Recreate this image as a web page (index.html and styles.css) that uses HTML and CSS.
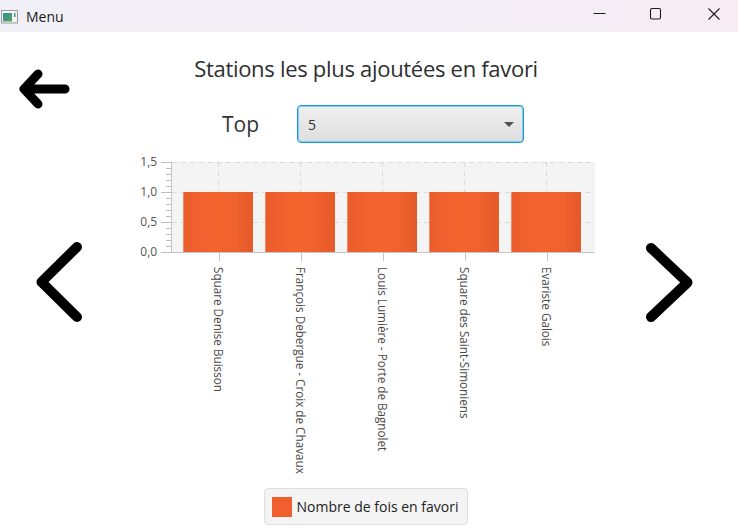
FILE: index.html
```html
<!DOCTYPE html>
<html lang="fr">
<head>
<meta charset="utf-8">
<title>Menu</title>
<link rel="stylesheet" href="styles.css">
</head>
<body>
<div class="window">
  <header class="titlebar">
    <svg class="app-icon" width="18" height="14" viewBox="0 0 18 14">
      <defs>
        <linearGradient id="ig" x1="0" y1="0" x2="1" y2="1">
          <stop offset="0" stop-color="#2f8f9a"/>
          <stop offset="1" stop-color="#5aa05a"/>
        </linearGradient>
      </defs>
      <rect x="0.5" y="0.5" width="16" height="12.5" fill="#f4f4f4" stroke="#9a9a9a"/>
      <rect x="2" y="3" width="9" height="8.5" fill="url(#ig)"/>
      <rect x="13" y="3" width="1.5" height="4" fill="#3f96a8"/>
    </svg>
    <span class="app-title">Menu</span>
    <div class="win-controls">
      <svg class="ctl" width="46" height="32" viewBox="0 0 46 32"><path d="M17.5 13.5 H29.5" stroke="#1c1c1c" stroke-width="1"/></svg>
      <svg class="ctl" width="58" height="32" viewBox="0 0 58 32"><rect x="28.5" y="8.5" width="10" height="10.5" rx="1.5" fill="none" stroke="#1c1c1c" stroke-width="1.1"/></svg>
      <svg class="ctl" width="58" height="32" viewBox="0 0 58 32"><path d="M28.5 8.5 L39.5 19.5 M39.5 8.5 L28.5 19.5" stroke="#1c1c1c" stroke-width="1.1"/></svg>
    </div>
  </header>

  <main class="main">
    <nav class="side side-left">
      <svg class="back" width="60" height="44" viewBox="0 0 60 44">
        <path d="M51 23 H10 M24 8 L10 23 L24 38" fill="none" stroke="#000" stroke-width="9" stroke-linecap="round" stroke-linejoin="round"/>
      </svg>
      <svg class="chev chev-left" width="56" height="90" viewBox="0 0 56 90">
        <path d="M47 10 L11.5 45 L47 80" fill="none" stroke="#000" stroke-width="10" stroke-linecap="round" stroke-linejoin="round"/>
      </svg>
    </nav>

    <section class="center">
      <h1 class="title">Stations les plus ajoutées en favori</h1>

      <div class="top-row">
        <span class="top-label">Top</span>
        <div class="combo">
          <span class="combo-value">5</span>
          <span class="combo-arrow"></span>
        </div>
      </div>

      <div class="chart">
        <div class="y-axis">
          <div class="y-labels">
            <span>1,5</span>
            <span>1,0</span>
            <span>0,5</span>
            <span>0,0</span>
          </div>
          <div class="y-ticks"></div>
        </div>
        <div class="plot-wrap">
          <div class="plot">
            <div class="cat"><div class="bar" style="height:60px"></div></div>
            <div class="cat"><div class="bar" style="height:60px"></div></div>
            <div class="cat"><div class="bar" style="height:60px"></div></div>
            <div class="cat"><div class="bar" style="height:60px"></div></div>
            <div class="cat"><div class="bar" style="height:60px"></div></div>
          </div>
          <div class="x-axis">
            <div class="x-cat"><span class="tick"></span><span class="x-label">Square Denise Buisson</span></div>
            <div class="x-cat"><span class="tick"></span><span class="x-label">François Debergue - Croix de Chavaux</span></div>
            <div class="x-cat"><span class="tick"></span><span class="x-label">Louis Lumière - Porte de Bagnolet</span></div>
            <div class="x-cat"><span class="tick"></span><span class="x-label">Square des Saint-Simoniens</span></div>
            <div class="x-cat"><span class="tick"></span><span class="x-label">Evariste Galois</span></div>
          </div>
        </div>
      </div>

      <div class="legend-row">
        <div class="legend">
          <span class="legend-mark"></span>
          <span class="legend-text">Nombre de fois en favori</span>
        </div>
      </div>
    </section>

    <nav class="side side-right">
      <svg class="chev chev-right" width="60" height="90" viewBox="0 0 60 90">
        <path d="M11 10 L47.5 44.5 L11 79" fill="none" stroke="#000" stroke-width="10" stroke-linecap="round" stroke-linejoin="round"/>
      </svg>
    </nav>
  </main>
</div>
</body>
</html>
```

FILE: styles.css
```css
* { box-sizing: border-box; }

html, body {
  margin: 0;
  padding: 0;
  background: #ffffff;
}

body {
  font-family: "Open Sans", "Noto Sans", "DejaVu Sans", sans-serif;
  color: #333333;
}

.window {
  width: 738px;
  height: 530px;
  display: flex;
  flex-direction: column;
  overflow: hidden;
}

/* ---------- title bar ---------- */
.titlebar {
  height: 32px;
  flex: 0 0 32px;
  display: flex;
  align-items: center;
  background: linear-gradient(to right, #f2f0f7, #f3eef7 60%, #f7ecf4);
}

.app-icon {
  margin-left: 1px;
  margin-top: 1px;
}

.app-title {
  margin-left: 7px;
  font-size: 14px;
  color: #1a1a1a;
  font-family: "Open Sans", "Noto Sans", sans-serif;
}

.win-controls {
  margin-left: auto;
  display: flex;
  align-items: flex-start;
  align-self: stretch;
}

.ctl { display: block; }

/* ---------- main ---------- */
.main {
  flex: 1;
  display: grid;
  grid-template-columns: 100px 1fr 100px;
}

.side {
  display: flex;
  flex-direction: column;
  align-items: flex-start;
}

.back {
  display: block;
  margin-top: 34px;
  margin-left: 14px;
}

.chev-left {
  display: block;
  margin-top: 127px;
  margin-left: 30px;
}

.chev-right {
  display: block;
  margin-top: 206px;
  margin-left: 2px;
}

/* ---------- center ---------- */
.center {
  display: flex;
  flex-direction: column;
}

.title {
  margin: 21px 0 0 0;
  padding-right: 6px;
  font-size: 22px;
  letter-spacing: -0.3px;
  line-height: 30px;
  font-weight: 400;
  text-align: center;
  color: #2e2e2e;
}

.top-row {
  margin-top: 22px;
  display: flex;
  align-items: center;
  padding-left: 122px;
}

.top-label {
  width: 75px;
  font-size: 21px;
  color: #333333;
}

.combo {
  width: 227px;
  height: 38px;
  display: flex;
  align-items: center;
  justify-content: space-between;
  padding: 0 9px 0 10px;
  border: 1px solid #1d9ad6;
  border-radius: 4px;
  box-shadow: inset 0 0 0 1px #7fcdee;
  background: linear-gradient(to bottom, #efefef, #dedede);
}

.combo-value {
  font-size: 14px;
  color: #333333;
}

.combo-arrow {
  width: 0;
  height: 0;
  border-left: 5px solid transparent;
  border-right: 5px solid transparent;
  border-top: 5px solid #505050;
  margin-top: 1px;
}

/* ---------- chart ---------- */
.chart {
  margin-top: 19px;
  display: flex;
  align-items: flex-start;
}

.y-axis {
  width: 72px;
  display: flex;
  align-items: flex-start;
}

.y-labels {
  width: 58px;
  height: 102px;
  margin-top: -6px;
  display: flex;
  flex-direction: column;
  justify-content: space-between;
  align-items: flex-end;
  font-size: 12px;
  line-height: 12px;
  color: #555555;
}

.y-ticks {
  width: 13px;
  height: 91px;
  margin-left: 2px;
  border-right: 1px solid #c4c4c4;
  background-image:
    repeating-linear-gradient(to bottom, #bdbdbd 0 1px, transparent 1px 30px),
    repeating-linear-gradient(to bottom, #bdbdbd 0 1px, transparent 1px 6px);
  background-size: 10px 100%, 5px 100%;
  background-position: 2px 0, 7px 0;
  background-repeat: no-repeat;
}

.plot-wrap {
  width: 423px;
  display: flex;
  flex-direction: column;
}

.plot {
  height: 90px;
  display: flex;
  align-items: flex-end;
  padding-left: 5px;
  background-color: #f4f4f4;
  background-image:
    linear-gradient(to right, #dadada 5px, transparent 5px),
    linear-gradient(to right, #dadada 5px, transparent 5px),
    linear-gradient(to right, #dadada 5px, transparent 5px);
  background-size: 9px 1px;
  background-repeat: repeat-x;
  background-position: 0 0, 0 30px, 0 60px;
}

.cat {
  width: 82px;
  height: 100%;
  display: flex;
  align-items: flex-end;
  justify-content: center;
  background-image: linear-gradient(to bottom, #dadada 5px, transparent 5px);
  background-size: 1px 9px;
  background-repeat: repeat-y;
  background-position: 41px 0;
}

.bar {
  width: 70px;
  background: linear-gradient(to right, #e95d2c, #f0612d 25%, #f3642f 50%, #ef612d 75%, #e45a29);
  box-shadow: inset 1px 0 0 #f08b62;
}

.x-axis {
  display: flex;
  padding-left: 5px;
  margin-left: -2px;
  border-top: 1px solid #c4c4c4;
  height: 236px;
}

.x-cat {
  width: 82px;
  display: flex;
  flex-direction: column;
  align-items: center;
  margin-left: 0;
}

.x-cat:first-child { margin-left: 2px; }

.tick {
  width: 1px;
  height: 8px;
  margin-left: 2px;
  background: #c4c4c4;
}

.x-label {
  margin-top: 6px;
  writing-mode: vertical-rl;
  font-size: 11.7px;
  line-height: 13px;
  color: #4a4a4a;
  white-space: nowrap;
}

/* ---------- legend ---------- */
.legend-row {
  display: flex;
  justify-content: center;
  padding-right: 7px;
}

.legend {
  display: flex;
  align-items: center;
  height: 37px;
  padding: 0 8px 0 7px;
  border: 1px solid #dedede;
  border-radius: 4px;
  background: #f4f4f4;
}

.legend-mark {
  width: 20px;
  height: 20px;
  background: #f05f2d;
}

.legend-text {
  margin-left: 5px;
  font-size: 14px;
  color: #222222;
}
```
